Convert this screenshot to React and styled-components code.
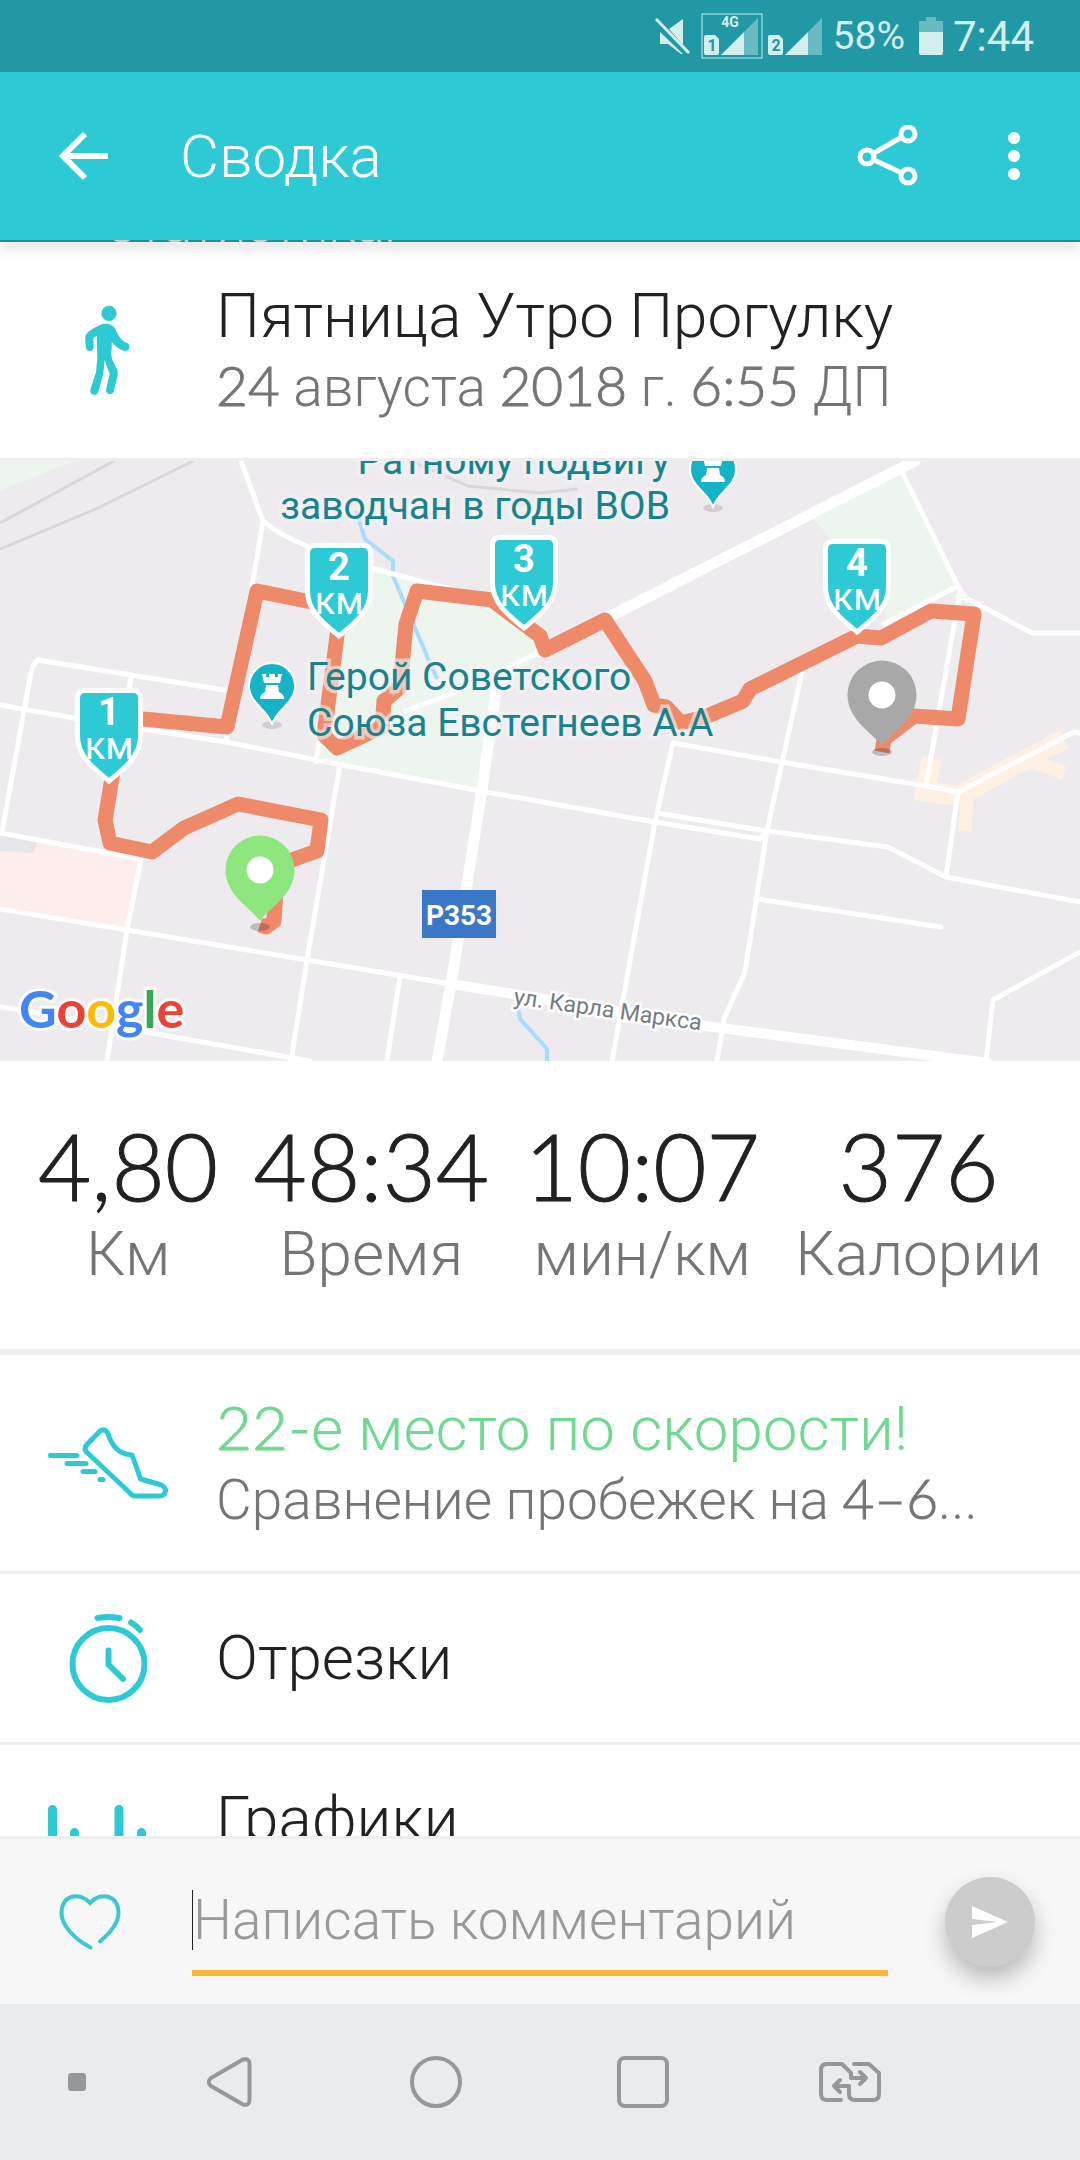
import styled, { createGlobalStyle } from "styled-components";

const roads = [
  "M241 0L263 60L226 280",
  "M263 60Q290 84 375 108L490 139",
  "M0 244L79 258L226 281L337 303L475 329L655 361L760 378L766 370",
  "M2 371L31 211Q33 203 38 199L131 214L224 229",
  "M131 214L129 232",
  "M0 372L141 398L127 469L107 600",
  "M0 448L127 469L307 499L451 523",
  "M319 282L316 301",
  "M340 303L331 357L307 499L291 600",
  "M400 515L387 600",
  "M0 546L21 549L151 572L310 600",
  "M406 250L448 234L540 191",
  "M902 11L958 125L967 139",
  "M958 125L884 163",
  "M958 135L970 139L1032 172H1080",
  "M960 130L926 325",
  "M673 282L781 301L926 325L958 331L1074 271L1080 272",
  "M958 331L946 416",
  "M673 282L655 361L612 600",
  "M657 352L760 369L888 386L946 416L1080 441",
  "M802 211L767 369L745 511L724 558L717 600",
  "M757 438L941 466",
  "M1080 491L993 539L986 600",
];

const shields = [
  { n: 1, x: 109, y: 227 },
  { n: 2, x: 339, y: 82 },
  { n: 3, x: 524, y: 74 },
  { n: 4, x: 857, y: 78 },
];

const stats = [
  { value: "4,80", label: "Км" },
  { value: "48:34", label: "Время" },
  { value: "10:07", label: "мин/км" },
  { value: "376", label: "Калории" },
];

const Signal = ({ sim, network }) => (
  <SimIcon width="62" height="46" viewBox="0 0 62 46" $boxed={!!network}>
    {network && <rect x="1" y="1" width="60" height="44" fill="none" stroke="#b9f1f3" />}
    {network && (
      <text x="29" y="14" fontSize="14" textAnchor="middle">
        {network}
      </text>
    )}
    <path d="M3 24q0-2 2-2h9l4 4v14q0 2-2 2h-11q-2 0-2-2z" />
    <path d="M20 42L43 19V42z" />
    <path d="M43 19L57 5V42H43z" opacity="0.4" />
    <text x="11" y="38" fontSize="16" textAnchor="middle" fill="#2398a5">
      {sim}
    </text>
  </SimIcon>
);

const Shield = ({ n, x, y }) => (
  <g transform={`translate(${x} ${y})`}>
    <path
      d="M-24 2.500H24Q31.500 2.500 31.500 10V48C31.500 68 16 80 0 93C-16 80 -31.500 68 -31.500 48V10Q-31.500 2.500 -24 2.500Z"
      fill="#2dcad6"
      stroke="#fff"
      strokeWidth="5"
    />
    <text y="37" fontSize="38" fontWeight="700" fill="#fff" textAnchor="middle">
      {n}
    </text>
    <text y="71" fontSize="38" fontWeight="400" fill="#fff" textAnchor="middle">
      км
    </text>
  </g>
);

const Pin = ({ x, y, color }) => (
  <g transform={`translate(${x} ${y})`}>
    <ellipse cy="6" rx="10" ry="4" fill="#000" opacity="0.2" />
    <path
      d="M0 0C-9 -13 -34.500 -26 -34.500 -51A34.500 34.500 0 0 1 34.500 -51C34.500 -26 9 -13 0 0Z"
      fill={color}
    />
    <circle cy="-51" r="13.500" fill="#fff" />
  </g>
);

const Landmark = ({ x, y }) => (
  <g transform={`translate(${x} ${y})`}>
    <ellipse cy="1" rx="10" ry="4" fill="#000" opacity="0.12" />
    <path
      d="M0 1C-3 -14 -23 -20 -23 -38A23 23 0 0 1 23 -38C23 -20 3 -14 0 1Z"
      fill="#15b3c7"
      stroke="#fff"
      strokeWidth="2"
    />
    <path
      d="M-10 -50h4v3h3v-3h6v3h3v-3h4l-2 9h-16zM-6 -39h12l1 7q5 2 5 7h-24q0-5 5-7z"
      fill="#fff"
    />
  </g>
);

const RouteMap = () => (
  <MapSvg viewBox="0 0 1080 600" role="img" aria-label="Маршрут">
    <rect width="1080" height="600" fill="#edebee" />
    <g fill="#edf6ee">
      <path d="M0 0H74L0 30Z" />
      <path d="M374 108L413 121L500 143L545 190L496 230L477 329L337 303L316 300L344 170Z" />
      <path d="M814 58L902 13L958 125L888 161L884 140Z" />
    </g>
    <path d="M0 374L38 381L33 392L0 390Z" fill="#e6e5e9" />
    <path d="M38 380L139 398L126 467L0 446V390L33 392Z" fill="#fdeded" />
    <g fill="none" stroke="#fef1e3" strokeWidth="20">
      <path d="M932 297L926 325" />
      <path d="M915 329L958 335L1064 278" />
      <path d="M1030 300L1064 312" strokeWidth="13" />
      <path d="M968 330L965 370" strokeWidth="13" />
    </g>
    <g fill="none" stroke="#d8d8dc" strokeWidth="3">
      <path d="M0 62L114 0" />
      <path d="M0 88L96 48L193 0" />
      <path d="M413 1L468 25L540 32L578 28" />
    </g>
    <g fill="none" stroke="#abdaff" strokeWidth="4">
      <path d="M356 50L365 78L393 100V115L427 195L437 218" />
      <path d="M518 546L520 558L540 580L547 588V600" />
    </g>
    <g fill="none" stroke="#fff" strokeWidth="5" strokeLinejoin="round" strokeLinecap="round">
      {roads.map((d) => (
        <path key={d} d={d} />
      ))}
      <path d="M915 0L540 191" strokeWidth="11" />
      <path d="M500 213L496 230L482 329L451 523L437 600" strokeWidth="11" />
      <path d="M451 523L513 533L698 564L988 602" strokeWidth="10" />
    </g>
    <path
      d="M260 464L266 466L274 460L276 430L289 400L317 390L321 359L238 343L184 367L152 391L110 382L105 359L112 317L120 256L143 258L227 266L257 130L341 147L337 175L324 274L337 287L382 266L384 240L400 226L406 163L417 130L492 139L540 175L545 189L605 159L645 220L654 244L666 246L681 262L705 256L743 240L750 228L857 175L881 177L931 150L974 153L958 258L914 255L884 278L882 291"
      fill="none"
      stroke="#ee8a6a"
      strokeWidth="15"
      strokeLinejoin="round"
    />
    <Landmark x={272} y={263} />
    <Landmark x={713} y={46} />
    <PlaceLabel textAnchor="end">
      <tspan x="670" y="13">Ратному подвигу</tspan>
      <tspan x="670" y="58">заводчан в годы ВОВ</tspan>
    </PlaceLabel>
    <PlaceLabel>
      <tspan x="307" y="229">Герой Советского</tspan>
      <tspan x="307" y="275">Союза Евстегнеев А.А</tspan>
    </PlaceLabel>
    <rect x="422" y="429" width="74" height="48" fill="#3a78c7" />
    <text x="459" y="464" fontSize="28" fontWeight="700" fill="#fff" textAnchor="middle">
      P353
    </text>
    <StreetLabel x="513" y="543" transform="rotate(8 513 543)">
      ул. Карла Маркса
    </StreetLabel>
    {shields.map((s) => (
      <Shield key={s.n} {...s} />
    ))}
    <Pin x={260} y={460} color="#8de77e" />
    <Pin x={882} y={285} color="#a8a8a8" />
    <LogoText x="19" y="567">
      <tspan fill="#4285f4">G</tspan>
      <tspan fill="#ea4335">o</tspan>
      <tspan fill="#fbbc05">o</tspan>
      <tspan fill="#4285f4">g</tspan>
      <tspan fill="#34a853">l</tspan>
      <tspan fill="#ea4335">e</tspan>
    </LogoText>
  </MapSvg>
);

const App = () => {
  return (
    <Page>
      <GlobalStyle />
      <StatusBar>
        <svg width="36" height="36" viewBox="0 0 36 36" fill="#d3eeee">
          <path d="M5 14L28 36H26L13 26H5z" />
          <path d="M14 11L28 1V27z" />
          <path d="M1 1L34 35" stroke="#d3eeee" strokeWidth="3" />
        </svg>
        <Signal sim="1" network="4G" />
        <Signal sim="2" />
        <Battery>58%</Battery>
        <svg width="24" height="40" viewBox="0 0 24 40" fill="#d3eeee">
          <path d="M7 1H17V5H24V16H0V5H7Z" opacity="0.4" />
          <path d="M0 16H24V37q0 2-2 2H2q-2 0-2-2z" />
        </svg>
        <Clock>7:44</Clock>
      </StatusBar>

      <AppBar>
        <IconButton aria-label="Назад">
          <svg width="50" height="50" viewBox="0 0 50 50" fill="none" stroke="#fff" strokeWidth="6">
            <path d="M49 25H5M26 3L4 25L26 47" />
          </svg>
        </IconButton>
        <BarTitle>Сводка</BarTitle>
        <IconButton aria-label="Поделиться">
          <svg width="62" height="62" viewBox="0 0 62 62" fill="none" stroke="#fff" strokeWidth="5">
            <path d="M17 28L45 12M17 35L45 48" />
            <circle cx="10" cy="32" r="7" />
            <circle cx="51" cy="9" r="7" />
            <circle cx="51" cy="51" r="7" />
          </svg>
        </IconButton>
        <IconButton aria-label="Ещё">
          <svg width="12" height="48" viewBox="0 0 12 48" fill="#fff">
            <circle cx="6" cy="6" r="6" />
            <circle cx="6" cy="24" r="6" />
            <circle cx="6" cy="42" r="6" />
          </svg>
        </IconButton>
      </AppBar>

      <Content>
        <Banner>Статистика:</Banner>

        <Row>
          <RowIcon>
            <svg width="80" height="110" viewBox="0 0 240 330" fill="#2dcad6">
              <circle cx="123" cy="55" r="23" />
              <path d="M58 114C62 108 90 92 101 88C120 82 136 90 142 102C150 120 158 136 176 143A13 13 0 0 1 170 168C152 163 140 153 131 141V162C128 176 130 190 136 200L148 224Q151 232 149 240L137 290A12 12 0 0 1 114 285L125 237L110 196L106 236L91 290A12 12 0 0 1 67 284L84 232L88 190L86 123L76 128L77 158A12 12 0 0 1 54 160L51 130Q51 120 58 114Z" />
            </svg>
          </RowIcon>
          <RowText>
            <Title>Пятница Утро Прогулку</Title>
            <Subtitle>
              <Num>24</Num> августа <Num>2018</Num> г. <Num>6:55</Num> ДП
            </Subtitle>
          </RowText>
        </Row>

        <RouteMap />

        <Stats>
          {stats.map((s) => (
            <Stat key={s.label}>
              <StatValue>{s.value}</StatValue>
              <StatLabel>{s.label}</StatLabel>
            </Stat>
          ))}
        </Stats>

        <Row>
          <RowIcon>
            <svg
              width="120"
              height="72"
              viewBox="0 0 120 72"
              fill="none"
              stroke="#2dcad6"
              strokeWidth="5"
              strokeLinecap="round"
              strokeLinejoin="round"
            >
              <path d="M2.500 28.500H29M19 36.500H38M35 44.500H47M52 52.500H55" />
              <path d="M52 4Q56 1 59.500 5.500C64 19 70 27 84 28L89.700 43.500L92.500 52L112 57.500Q118 60 117.500 64Q117 68.500 112 69H87Q84 69 81 65L38 24.500Q36 21 39 17.500Z" />
            </svg>
          </RowIcon>
          <RowText>
            <Title $accent>
              <Num>22-</Num>е место по скорости!
            </Title>
            <Subtitle>
              Сравнение пробежек на <Num>4–6</Num>...
            </Subtitle>
          </RowText>
        </Row>

        <Row $single>
          <RowIcon>
            <svg
              width="78"
              height="90"
              viewBox="0 0 78 90"
              fill="none"
              stroke="#2dcad6"
              strokeWidth="6"
              strokeLinecap="round"
              strokeLinejoin="round"
            >
              <circle cx="39.500" cy="51" r="36" />
              <path d="M28.500 5Q39.500 3 50.500 5M62 9.500Q67 12.500 71 17M39.500 37.500V51.500L54 66" />
            </svg>
          </RowIcon>
          <Title>Отрезки</Title>
        </Row>

        <Row>
          <RowIcon>
            <svg
              width="120"
              height="96"
              viewBox="0 0 120 96"
              stroke="#2dcad6"
              strokeWidth="9"
              strokeLinecap="round"
            >
              <path d="M4.500 4.500V91M26.500 27.500V91M49 50V91M71 4.500V91M93.500 27.500V91" />
            </svg>
          </RowIcon>
          <RowText>
            <Title>Графики</Title>
          </RowText>
        </Row>
      </Content>

      <CommentBar>
        <IconButton type="button" aria-label="Нравится">
          <svg
            width="64"
            height="60"
            viewBox="0 0 64 60"
            fill="none"
            stroke="#3cc8d2"
            strokeWidth="4"
            strokeLinecap="round"
          >
            <path d="M42 49.500C52 41 60.500 31 60.500 21C60.500 2 42 0 32 11C22 0 3.500 2 3.500 21C3.500 33 16 47 32.500 55.500" />
          </svg>
        </IconButton>
        <Field>
          <Caret />
          <Input type="text" placeholder="Написать комментарий" aria-label="Написать комментарий" />
        </Field>
        <SendButton aria-label="Отправить">
          <svg width="38" height="34" viewBox="0 0 38 34" fill="#fff">
            <path d="M1 1L37 17L1 33V20L27 17L1 14Z" />
          </svg>
        </SendButton>
      </CommentBar>

      <NavBar>
        <NavButton $first aria-label="Скрыть панель">
          <svg width="18" height="18">
            <rect x="2" y="2" width="14" height="14" rx="1" fill="#96979a" />
          </svg>
        </NavButton>
        <NavButton aria-label="Назад">
          <svg width="48" height="54" viewBox="0 0 48 54">
            <path d="M38 4.500L6 23Q1.500 27 6 31L38 49.500Q44.500 51 44.500 45V9Q44.500 3 38 4.500Z" />
          </svg>
        </NavButton>
        <NavButton aria-label="Домой">
          <svg width="54" height="54" viewBox="0 0 54 54">
            <circle cx="27" cy="27" r="24" />
          </svg>
        </NavButton>
        <NavButton aria-label="Недавние">
          <svg width="54" height="54" viewBox="0 0 54 54">
            <rect x="3" y="3" width="48" height="48" rx="6" />
          </svg>
        </NavButton>
        <NavButton aria-label="Сменить SIM">
          <svg width="64" height="42" viewBox="0 0 64 42">
            <path d="M23 39H9Q3 39 3 33V9Q3 3 9 3H24L33 12V17H47M42 11L48 17L42 23" />
            <path d="M36 3H51L61 12V33Q61 39 55 39H37Q31 39 31 33V25H17M22 19L16 25L22 31" />
          </svg>
        </NavButton>
      </NavBar>
    </Page>
  );
};

export default App;

const GlobalStyle = createGlobalStyle`
  * {
    box-sizing: border-box;
  }

  body {
    margin: 0;
    font-family: Roboto, "Noto Sans", sans-serif;
    font-weight: 300;
    color: #212121;
  }

  button {
    border: 0;
    padding: 0;
    background: none;
    cursor: pointer;
  }

  svg {
    display: block;
    flex-shrink: 0;
  }
`;

const Page = styled.div`
  display: flex;
  flex-direction: column;
  height: 100vh;
  overflow: hidden;
  background: #fff;
`;

const StatusBar = styled.div`
  display: flex;
  align-items: center;
  justify-content: flex-end;
  flex-shrink: 0;
  height: 72px;
  padding-right: 46px;
  background: #2398a5;
  color: #d3eeee;
  font-weight: 400;
`;

const SimIcon = styled.svg`
  margin-left: ${({ $boxed }) => ($boxed ? "10px" : "2px")};
  fill: #d3eeee;
  font-weight: 700;
`;

const Battery = styled.span`
  margin: 0 14px 0 6px;
  font-size: 39px;
`;

const Clock = styled.span`
  margin-left: 10px;
  font-size: 42px;
`;

const AppBar = styled.header`
  display: grid;
  grid-template-columns: 168px 1fr 120px 132px;
  align-items: center;
  flex-shrink: 0;
  height: 168px;
  background: #2dcad6;
  position: relative;
  z-index: 1;
`;

const IconButton = styled.button`
  display: flex;
  align-items: center;
  justify-content: center;
  height: 100%;
`;

const BarTitle = styled.h1`
  margin: 0 0 0 12px;
  font-size: 60px;
  font-weight: 300;
  color: #fff;
`;

const Content = styled.main`
  flex: 1;
  min-height: 0;
  overflow: hidden;
`;

/* only the bottom edge stays visible under the app bar */
const Banner = styled.div`
  display: flex;
  align-items: flex-end;
  height: 2px;
  padding-left: 104px;
  overflow: hidden;
  background: #248c98;
  color: #ccc;
  font-size: 53px;
  line-height: 36px;
  box-shadow: 0 4px 12px rgba(0, 0, 0, 0.5);
  position: relative;
`;

const Row = styled.section`
  display: grid;
  grid-template-columns: 216px 1fr;
  align-items: center;
  min-height: ${({ $single }) => ($single ? "171px" : "219px")};
  border-bottom: 3px solid #eee;
`;

const RowIcon = styled.div`
  display: flex;
  justify-content: center;
`;

const RowText = styled.div`
  align-self: start;
  padding-top: 39px;
  white-space: nowrap;
`;

const Title = styled.h2`
  margin: 0;
  font-size: 62px;
  line-height: 70px;
  font-weight: 300;
  color: ${({ $accent }) => ($accent ? "#6fd98f" : "#212121")};
`;

const Subtitle = styled.p`
  margin: 0;
  font-size: 55px;
  line-height: 72px;
  color: #757575;
`;

const Num = styled.span`
  font-family: Lato, sans-serif;
  line-height: 1;
  -webkit-text-stroke: 1px currentColor;
`;

const MapSvg = styled.svg`
  width: 100%;
  height: auto;
`;

const PlaceLabel = styled.text`
  fill: #17838c;
  font-size: 39px;
  font-weight: 400;
  paint-order: stroke;
  stroke: rgba(245, 243, 245, 0.6);
  stroke-width: 7px;
`;

const StreetLabel = styled.text`
  fill: #757b80;
  font-size: 23px;
  font-weight: 400;
  paint-order: stroke;
  stroke: #fff;
  stroke-width: 5px;
`;

const LogoText = styled.text`
  font-family: Lato, sans-serif;
  font-size: 52px;
  font-weight: 700;
  paint-order: stroke;
  stroke: rgba(255, 255, 255, 0.8);
  stroke-width: 6px;
`;

const Stats = styled.section`
  display: flex;
  justify-content: space-between;
  min-height: 294px;
  padding: 54px 38px 0;
  border-bottom: 6px solid #eee;
`;

const Stat = styled.div`
  text-align: center;
`;

const StatValue = styled.div`
  font-family: Lato, sans-serif;
  font-size: 92px;
  line-height: 102px;
  -webkit-text-stroke: 1px currentColor;
`;

const StatLabel = styled.div`
  font-size: 62px;
  line-height: 74px;
  color: #757575;
`;

const CommentBar = styled.form`
  display: grid;
  grid-template-columns: 180px 1fr 90px;
  align-items: center;
  flex-shrink: 0;
  height: 168px;
  padding-right: 45px;
  background: #f7f7f7;
  border-top: 3px solid #eee;
`;

const Field = styled.div`
  display: flex;
  align-items: center;
  min-width: 0;
  height: 100px;
  margin: 8px 57px 0 12px;
  padding-bottom: 6px;
  border-bottom: 6px solid #fcb73b;
`;

const Caret = styled.span`
  width: 1px;
  height: 60px;
  background: #212121;
`;

const Input = styled.input`
  flex: 1;
  min-width: 0;
  border: 0;
  padding: 0;
  outline: 0;
  background: none;
  font: inherit;
  font-size: 55px;

  &::placeholder {
    color: #999;
    opacity: 1;
  }
`;

const SendButton = styled.button`
  display: flex;
  align-items: center;
  justify-content: center;
  width: 90px;
  height: 90px;
  border-radius: 50%;
  background: #ccc;
  box-shadow: 0 12px 22px rgba(0, 0, 0, 0.25);
`;

const NavBar = styled.nav`
  display: grid;
  grid-template-columns: 125fr repeat(4, 207fr) 127fr;
  flex-shrink: 0;
  height: 156px;
  background: #e9ebee;
`;

const NavButton = styled.button`
  display: flex;
  align-items: center;
  justify-content: center;
  padding-left: ${({ $first }) => ($first ? "28px" : "0")};

  svg {
    fill: none;
    stroke: #96979a;
    stroke-width: 4px;
    stroke-linecap: round;
    stroke-linejoin: round;
  }
`;
